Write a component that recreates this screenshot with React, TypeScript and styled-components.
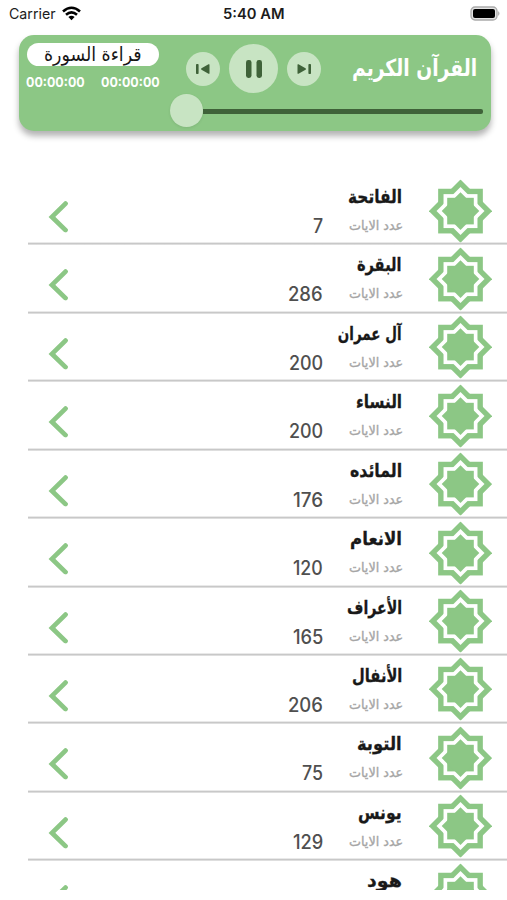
import React, { useLayoutEffect, useRef, useState } from "react";
import styled, { createGlobalStyle } from "styled-components";

const green = "#8cc785";
const pale = "#c8e4c3";
const dark = "#3f6239";

const GlobalStyle = createGlobalStyle`
  * { box-sizing: border-box; }
  body { margin: 0; background: #fff; overflow: hidden; }
`;

const Screen = styled.div`
  width: 507px;
  height: 900px;
  background: #fff;
  display: flex;
  flex-direction: column;
  overflow: hidden;
  font-family: "DejaVu Sans", sans-serif;
`;

const StatusBar = styled.header`
  height: 35px;
  flex: none;
  display: grid;
  grid-template-columns: 1fr auto 1fr;
  align-items: center;
  padding: 0 6px 8px 9px;
  color: #1c1c1c;
`;
const Carrier = styled.div`
  display: flex;
  align-items: center;
  gap: 6px;
`;
const Clock = styled.div`
  margin-left: -3px;
`;
const Battery = styled.svg`
  justify-self: end;
  display: block;
`;

const Player = styled.section`
  flex: none;
  height: 96px;
  margin: 0 16px 0 19px;
  padding: 8px 8px 0 7px;
  border-radius: 15px;
  background: ${green};
  box-shadow: 0 5px 6px rgba(0, 0, 0, 0.3);
`;
const PlayerTop = styled.div`
  display: flex;
  height: 51px;
`;
const Info = styled.div`
  width: 134px;
`;
const Pill = styled.div`
  width: 132px;
  height: 23px;
  margin-left: 1px;
  border-radius: 12px;
  background: #fff;
  color: #171717;
  display: flex;
  justify-content: center;
  align-items: center;
`;
const Times = styled.div`
  display: flex;
  justify-content: space-between;
  width: 134px;
  padding-top: 7px;
  color: #fff;
`;
const Controls = styled.div`
  display: flex;
  align-items: center;
  gap: 9px;
  margin-left: 26px;
`;
const RoundButton = styled.button<{ $size: number }>`
  width: ${(p) => p.$size}px;
  height: ${(p) => p.$size}px;
  padding: 0;
  border: 0;
  border-radius: 50%;
  background: ${pale};
  display: grid;
  place-items: center;
`;
const PlayerTitle = styled.div`
  margin: 10px 6px 0 auto;
  color: #fff;
`;
const Slider = styled.div`
  display: flex;
  align-items: center;
  margin-left: 144px;
  height: 33px;
`;
const Knob = styled.div`
  width: 33px;
  height: 33px;
  flex: none;
  border-radius: 50%;
  background: ${pale};
  box-shadow: 0 1px 3px rgba(0, 0, 0, 0.08);
`;
const Track = styled.div`
  flex: 1;
  height: 5px;
  margin-top: 2px;
  border-radius: 0 2px 2px 0;
  background: ${dark};
`;

const List = styled.main`
  margin: 45px 0 0 28px;
  height: 714px;
  flex: none;
  overflow: hidden;
`;
const Row = styled.div`
  height: 68.43px;
  display: flex;
  background: linear-gradient(#c8c8c8, #c8c8c8) left bottom / 100% 2px no-repeat;
  transform: translateY(0.6px);
`;
const Chevron = styled.svg`
  display: block;
  margin: 24px 0 0 20px;
`;
const Count = styled.div`
  margin: 37px 26.5px 0 auto;
  color: #4f4f4f;
`;
const Names = styled.div`
  width: 54px;
  margin-left: auto;
  display: flex;
  flex-direction: column;
  align-items: flex-end;
`;
const CountedNames = styled(Names)`
  margin-left: 0;
`;
const SurahName = styled.div`
  margin: 8px 1px 0 0;
  height: 33px;
  color: #191919;
  -webkit-text-stroke: 0.3px #191919;
`;
const Caption = styled.div`
  color: #a6a6a6;
  -webkit-text-stroke: 0.35px #a6a6a6;
`;
const Star = styled.svg`
  display: block;
  margin: 2.5px 15px 0 26px;
`;

const Fitted = styled.span<{ $width: number; $size: number; $weight: number; $ltr?: boolean }>`
  display: flex;
  direction: ${(p) => (p.$ltr ? "ltr" : "rtl")};
  width: ${(p) => p.$width}px;
  font-family: ${(p) => (p.$ltr ? "Inter" : '"DejaVu Sans"')}, sans-serif;
  font-size: ${(p) => p.$size}px;
  font-weight: ${(p) => p.$weight};
  line-height: ${(p) => Math.round(p.$size * 1.3)}px;
`;
const FittedText = styled.span<{ $ltr?: boolean }>`
  flex: none;
  white-space: nowrap;
  transform-origin: ${(p) => (p.$ltr ? "left" : "right")} center;
`;

type FitProps = { text: string; width: number; size: number; weight?: number; ltr?: boolean };

/* Condenses or widens a label so that it fills its column width. */
function Fit({ text, width, size, weight = 400, ltr }: FitProps) {
  const ref = useRef<HTMLSpanElement>(null);
  const [scale, setScale] = useState(1);
  useLayoutEffect(() => {
    if (ref.current) setScale(width / ref.current.offsetWidth);
  }, [text, width, size]);
  return (
    <Fitted $width={width} $size={size} $weight={weight} $ltr={ltr}>
      <FittedText ref={ref} $ltr={ltr} style={{ transform: `scaleX(${scale})` }}>
        {text}
      </FittedText>
    </Fitted>
  );
}

function StarLayer({ r, fill }: { r: number; fill: string }) {
  const h = r / Math.SQRT2;
  return (
    <g fill={fill}>
      <rect x={-h} y={-h} width={h * 2} height={h * 2} />
      <rect x={-h} y={-h} width={h * 2} height={h * 2} transform="rotate(45)" />
    </g>
  );
}

type Surah = { name: string; w: number; count?: string; cw?: number };

const surahs: Surah[] = [
  { name: "الفاتحة", w: 54, count: "7", cw: 10 },
  { name: "البقرة", w: 45, count: "286", cw: 35 },
  { name: "آل عمران", w: 64, count: "200", cw: 34 },
  { name: "النساء", w: 46, count: "200", cw: 34 },
  { name: "المائده", w: 52, count: "176", cw: 30 },
  { name: "الانعام", w: 52, count: "120", cw: 30 },
  { name: "الأعراف", w: 55, count: "165", cw: 30 },
  { name: "الأنفال", w: 50, count: "206", cw: 35 },
  { name: "التوبة", w: 45, count: "75", cw: 21 },
  { name: "يونس", w: 44, count: "129", cw: 30 },
  { name: "هود", w: 35 },
];

function SurahRow({ name, w, count, cw = 30 }: Surah) {
  const title = (
    <SurahName>
      <Fit text={name} width={w} size={18.5} weight={700} />
    </SurahName>
  );
  return (
    <Row>
      <Chevron width="22" height="32" viewBox="0 0 22 32">
        <path d="M17.5 3L4 16.3L17.5 29.5" fill="none" stroke={green} strokeWidth="4.8" strokeLinecap="round" />
      </Chevron>
      {count ? (
        <>
          <Count>
            <Fit text={count} width={cw} size={19.5} weight={450} ltr />
          </Count>
          <CountedNames>
            {title}
            <Caption>
              <Fit text="عدد الايات" width={54} size={12.5} />
            </Caption>
          </CountedNames>
        </>
      ) : (
        <Names>{title}</Names>
      )}
      <Star width="63" height="63" viewBox="-31.5 -31.5 63 63">
        <StarLayer r={31.6} fill={green} />
        <StarLayer r={24} fill="#fff" />
        <StarLayer r={18.8} fill={green} />
      </Star>
    </Row>
  );
}

export default function App() {
  return (
    <>
      <GlobalStyle />
      <Screen>
        <StatusBar>
          <Carrier>
            <Fit text="Carrier" width={47} size={14.5} ltr />
            <svg width="19" height="15" viewBox="0 0 19 14">
              <g fill="none" stroke="#000" strokeWidth="2.6">
                <path d="M1 5Q9.5-2.5 18 5" />
                <path d="M4 8.2Q9.5 3.5 15 8.2" />
              </g>
              <path d="M6.4 10.4Q9.5 7.9 12.6 10.4L9.5 13.7Z" />
            </svg>
          </Carrier>
          <Clock>
            <Fit text="5:40 AM" width={61} size={14} weight={600} ltr />
          </Clock>
          <Battery width="31" height="15" viewBox="0 0 31 15">
            <rect x="1" y="1" width="26" height="13" rx="4" fill="#e4e4e4" stroke="#aaa" strokeWidth="1.3" />
            <rect x="3" y="3" width="22" height="9" rx="2" />
            <path d="M28.3 5Q30.5 7.5 28.3 10Z" fill="#999" />
          </Battery>
        </StatusBar>

        <Player>
          <PlayerTop>
            <Info>
              <Pill>
                <Fit text="قراءة السورة" width={98} size={19.5} />
              </Pill>
              <Times>
                <Fit text="00:00:00" width={59} size={13.5} weight={650} ltr />
                <Fit text="00:00:00" width={59} size={13.5} weight={650} ltr />
              </Times>
            </Info>
            <Controls>
              <RoundButton $size={34} aria-label="previous">
                <svg width="16" height="12" viewBox="0 0 16 12" fill={dark}>
                  <rect x="1" y="1" width="2.6" height="10" rx=".8" />
                  <path d="M14.5 1.8V10.2Q14.5 11.2 13.5 10.7L6.5 6.7Q5.4 6 6.5 5.3L13.5 1.3Q14.5.8 14.5 1.8Z" />
                </svg>
              </RoundButton>
              <RoundButton $size={49} aria-label="pause">
                <svg width="18" height="20" viewBox="0 0 18 20" fill={dark}>
                  <rect x="1" y="1" width="5.5" height="18" rx="2.4" />
                  <rect x="11.5" y="1" width="5.5" height="18" rx="2.4" />
                </svg>
              </RoundButton>
              <RoundButton $size={34} aria-label="next">
                <svg width="16" height="12" viewBox="0 0 16 12" fill={dark}>
                  <rect x="12.4" y="1" width="2.6" height="10" rx=".8" />
                  <path d="M1.5 1.8V10.2Q1.5 11.2 2.5 10.7L9.5 6.7Q10.6 6 9.5 5.3L2.5 1.3Q1.5.8 1.5 1.8Z" />
                </svg>
              </RoundButton>
            </Controls>
            <PlayerTitle>
              <Fit text="القرآن الكريم" width={125} size={23.5} weight={700} />
            </PlayerTitle>
          </PlayerTop>
          <Slider>
            <Knob />
            <Track />
          </Slider>
        </Player>

        <List>
          {surahs.map((s) => (
            <SurahRow key={s.name} {...s} />
          ))}
        </List>
      </Screen>
    </>
  );
}
